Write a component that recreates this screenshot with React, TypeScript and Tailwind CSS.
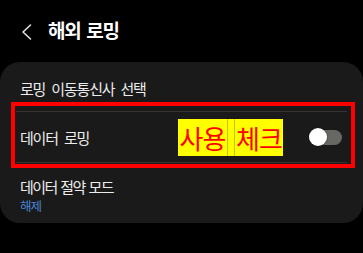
import React from "react";

export default function App() {
  return (
    <div
      className="relative w-[363px] h-[253px] overflow-hidden bg-black text-[#ececec]"
      style={{ fontFamily: '"Noto Sans CJK KR", "Noto Sans", sans-serif' }}
    >
      {/* Header */}
      <div className="h-[62px] flex items-center pl-[21px] pb-[4px]">
        <svg width="11" height="16" viewBox="0 0 11 16" className="mt-[5px]">
          <path d="M9.5 1 L2 8 L9.5 15" fill="none" stroke="#e6e6e6" strokeWidth="1.5" strokeLinecap="round" strokeLinejoin="round" />
        </svg>
        <span className="ml-[16px] text-[19px] font-bold tracking-[-1.3px] [word-spacing:3px] text-white leading-none">해외 로밍</span>
      </div>

      {/* Card */}
      <div className="h-[161px] rounded-[20px] bg-[#1a1a1a] flex flex-col">
        <div className="h-[49px] flex items-center pl-[20px] pt-[3px]">
          <span className="text-[15px] tracking-[-1.2px] [word-spacing:4px] leading-none">로밍 이동통신사 선택</span>
        </div>
        <div className="h-px mx-[16px] bg-[#333333]" />
        <div className="h-[50px] flex items-center justify-between pl-[20px] pr-[21px]">
          <span className="text-[15px] tracking-[-1.2px] [word-spacing:4px] leading-none">데이터 로밍</span>
          <div className="relative w-[33px] h-[15px] rounded-full bg-[#676763] flex items-center">
            <div className="w-[18px] h-[18px] rounded-full bg-white shadow-[0_0_2px_rgba(0,0,0,0.5)]" />
          </div>
        </div>
        <div className="h-px mx-[16px] bg-[#333333]" />
        <div className="flex flex-col pl-[20px] pt-[16px]">
          <span className="text-[15px] tracking-[-1.6px] [word-spacing:2px] leading-none">데이터 절약 모드</span>
          <span className="mt-[6px] text-[12.5px] tracking-[-1px] leading-none text-[#4a86d6]">해제</span>
        </div>
      </div>

      {/* Red annotation box */}
      <div className="absolute left-[11px] top-[102px] w-[344px] h-[66px] border-[4px] border-[#ff0000]" />

      {/* Yellow label */}
      <div className="absolute left-[178px] top-[119px] h-[37px] flex bg-[#ffff00] text-[#ff0000] text-[26px] leading-none tracking-[-1px]">
        <span className="w-[49px] flex items-center justify-center">사용</span>
        <span className="w-[8px] border-l border-r border-[#c4c400]" />
        <span className="w-[48px] flex items-center justify-center">체크</span>
      </div>
    </div>
  );
}
